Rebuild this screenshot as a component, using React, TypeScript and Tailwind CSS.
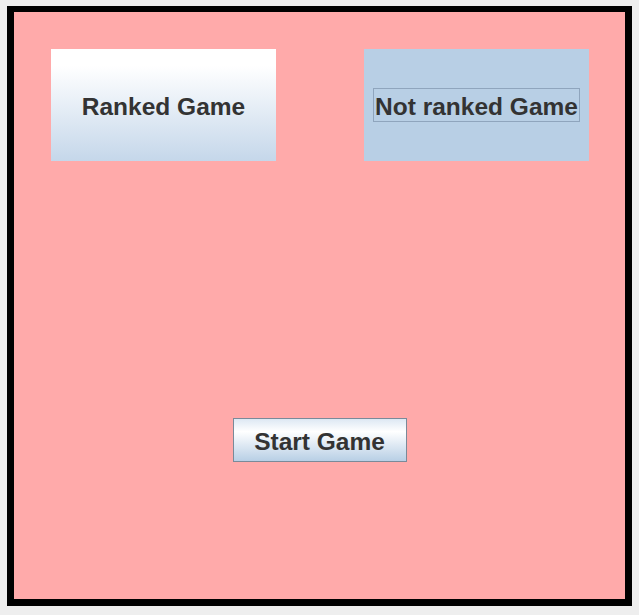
export default function App() {
    return (
        <div className="h-[615px] w-[639px] bg-[#eeeeee] pl-[7px] pt-[6px] font-['Liberation_Sans',Arial,sans-serif]">
            <div className="h-[600px] w-[625px] border-[7px] border-t-[6px] border-black bg-[#ffaaaa] flex flex-col">
                <div className="flex justify-between pl-[37px] pr-[36px] pt-[37px]">
                    <button className="w-[225px] h-[112px] pt-[4px] bg-gradient-to-b from-white from-[15%] to-[#c5d7ea] flex items-center justify-center text-[24.5px] font-bold text-[#333333]">
                        Ranked Game
                    </button>
                    <button className="w-[225px] h-[112px] bg-[#b8cfe5] flex items-center justify-center text-[24.5px] font-bold text-[#333333]">
                        <span className="border border-[#8fa5bd] px-[1px] pt-[5px] h-[34px] flex items-center leading-none">
                            Not ranked Game
                        </span>
                    </button>
                </div>
                <div className="flex justify-center pt-[257px]">
                    <button className="w-[174px] h-[44px] pt-[4px] border border-[#7a8a99] bg-gradient-to-b from-[#dde8f3] via-white via-[30%] to-[#b8cfe5] flex items-center justify-center text-[24.5px] font-bold text-[#333333]">
                        Start Game
                    </button>
                </div>
            </div>
        </div>
    )
}
